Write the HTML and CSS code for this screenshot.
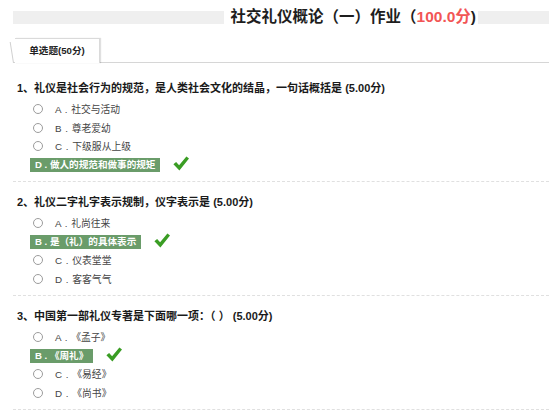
FILE: index.html
```html
<!DOCTYPE html>
<html lang="zh-CN">
<head>
<meta charset="utf-8">
<title>社交礼仪概论（一）作业</title>
<link rel="stylesheet" href="styles.css">
</head>
<body>
<div class="page">
  <div class="head">
    <div class="bar"></div>
    <h1 class="title">社交礼仪概论（一）作业（<span class="score">100.0分</span>)</h1>
    <div class="bar end"></div>
  </div>

  <div class="tabs">
    <div class="tab">单选题(50分)</div>
  </div>

  <div class="question first">
    <div class="q-title">1、礼仪是社会行为的规范，是人类社会文化的结晶，一句话概括是 (5.00分)</div>
    <div class="options">
      <div class="opt"><span class="radio"></span><span class="opt-text">A . 社交与活动</span></div>
      <div class="opt"><span class="radio"></span><span class="opt-text">B . 尊老爱幼</span></div>
      <div class="opt"><span class="radio"></span><span class="opt-text">C . 下级服从上级</span></div>
      <div class="opt"><span class="answer">D . 做人的规范和做事的规矩</span><svg class="check" viewBox="0 0 16 15" width="16" height="15"><path d="M0.4 8.3 L3.1 5.9 L6.1 9.3 L13.4 0.4 L16 2.6 L6.4 14.6 Z"/></svg></div>
    </div>
  </div>

  <div class="question">
    <div class="q-title">2、礼仪二字礼字表示规制，仪字表示是 (5.00分)</div>
    <div class="options">
      <div class="opt"><span class="radio"></span><span class="opt-text">A . 礼尚往来</span></div>
      <div class="opt"><span class="answer">B . 是（礼）的具体表示</span><svg class="check" viewBox="0 0 16 15" width="16" height="15"><path d="M0.4 8.3 L3.1 5.9 L6.1 9.3 L13.4 0.4 L16 2.6 L6.4 14.6 Z"/></svg></div>
      <div class="opt"><span class="radio"></span><span class="opt-text">C . 仪表堂堂</span></div>
      <div class="opt"><span class="radio"></span><span class="opt-text">D . 客客气气</span></div>
    </div>
  </div>

  <div class="question">
    <div class="q-title">3、中国第一部礼仪专著是下面哪一项：（ ） (5.00分)</div>
    <div class="options">
      <div class="opt"><span class="radio"></span><span class="opt-text">A . 《孟子》</span></div>
      <div class="opt"><span class="answer">B . 《周礼》</span><svg class="check" viewBox="0 0 16 15" width="16" height="15"><path d="M0.4 8.3 L3.1 5.9 L6.1 9.3 L13.4 0.4 L16 2.6 L6.4 14.6 Z"/></svg></div>
      <div class="opt"><span class="radio"></span><span class="opt-text">C . 《易经》</span></div>
      <div class="opt"><span class="radio"></span><span class="opt-text">D . 《尚书》</span></div>
    </div>
  </div>
</div>
</body>
</html>
```

FILE: styles.css
```css
* { box-sizing: border-box; }
html, body { margin: 0; padding: 0; background: #fff; }
body {
  font-family: "Liberation Sans", "Noto Sans CJK SC", sans-serif;
  color: #333;
}
.page {
  padding: 4px 9px 0 13px;
}
.head {
  display: flex;
  align-items: center;
  height: 26px;
}
.head .bar {
  flex: 1;
  height: 13px;
  background: #efefef;
}
.head .bar.end {
  flex: 0 0 71px;
}
.title {
  margin: 0;
  padding: 0 2px 0 7px;
  font-size: 15.5px;
  font-weight: bold;
  line-height: 26px;
  color: #1e1e1e;
  white-space: nowrap;
}
.score { color: #f25555; }

.tabs {
  margin-top: 8px;
  padding-left: 2px;
  display: flex;
  border-bottom: 1px solid #d6d6d6;
}
.tab {
  position: relative;
  width: 85px;
  height: 25px;
  margin-bottom: -1px;
  border: 1px solid #dadada;
  border-bottom: none;
  border-left: none;
  background: #fff;
  box-shadow: 1px 0 1px rgba(0, 0, 0, 0.12);
  font-size: 9.6px;
  font-weight: bold;
  line-height: 24px;
  text-align: center;
  color: #222;
}
.tab::before {
  content: "";
  position: absolute;
  left: -2px;
  top: 3px;
  bottom: 0;
  border-left: 1px solid #d0d0d0;
  transform: skewX(9deg);
  transform-origin: bottom;
}

.question {
  padding: 12px 0 6.67px 4px;
  border-bottom: 1px dashed #e0e0e0;
}
.question.first { padding-top: 17px; }
.q-title {
  font-size: 11px;
  font-weight: bold;
  line-height: 16px;
  color: #1a1a1a;
  white-space: nowrap;
}
.options {
  margin-top: 3.67px;
  padding-left: 13px;
}
.opt {
  height: 18.67px;
  display: flex;
  align-items: center;
}
.radio {
  flex: 0 0 10px;
  width: 10px;
  height: 10px;
  margin-left: 3px;
  margin-right: 12px;
  border: 1px solid #9c9c9c;
  border-radius: 50%;
  background: #fff;
}
.opt-text {
  font-size: 9.8px;
  color: #444;
  white-space: nowrap;
  word-spacing: 1px;
}
.answer {
  background: #6a9c6a;
  color: #fff;
  font-size: 9.6px;
  font-weight: bold;
  line-height: 14px;
  padding: 0 5px;
  white-space: nowrap;
}
.check {
  margin-left: 13px;
  margin-top: -3px;
  fill: #3a9d24;
}
```
